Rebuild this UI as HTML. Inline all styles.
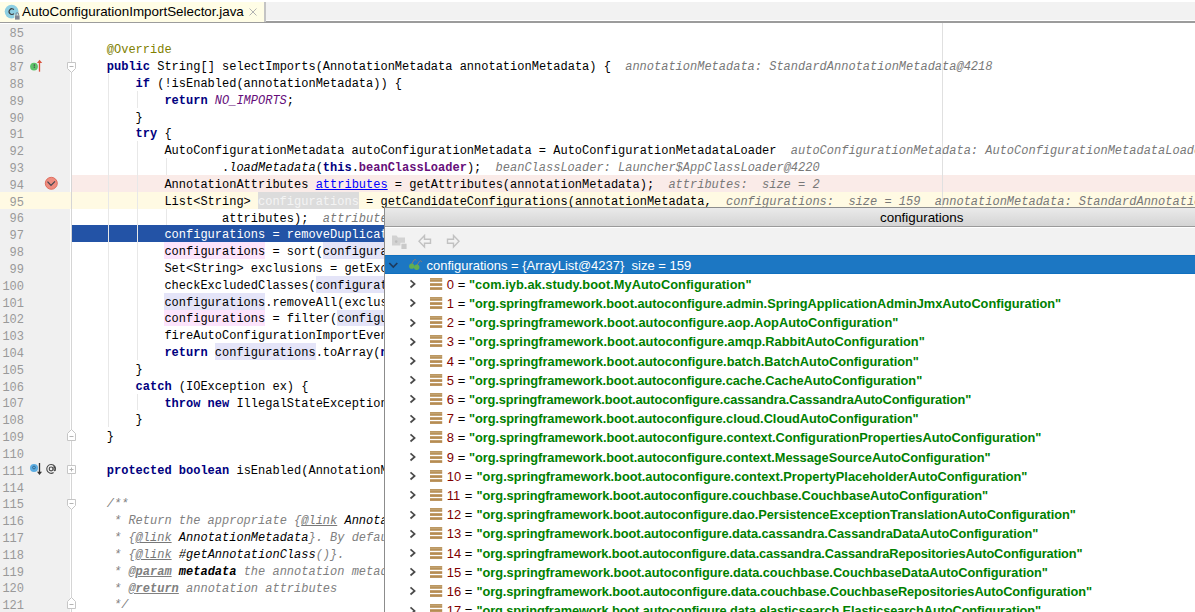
<!DOCTYPE html>
<html><head><meta charset="utf-8">
<style>
*{margin:0;padding:0;box-sizing:border-box}
html,body{width:1195px;height:612px;overflow:hidden;background:#fff}
body{position:relative;font-family:"Liberation Sans",sans-serif}
#tabbar{position:absolute;left:0;top:0;width:1195px;height:23px;background:#fff}
#tabrest{position:absolute;left:266px;top:2px;right:0;height:18px;background:#F2F2F2}
#tabline{position:absolute;left:0;top:21px;right:0;height:2px;background:#9C9C9C}
#tab{position:absolute;left:0;top:2px;width:264px;height:20px;background:#FFFDE6}
#tabedge{position:absolute;left:264px;top:2px;width:2px;height:20px;background:#C4C4C4}
#tabtitle{position:absolute;left:22px;top:3px;font-size:13.4px;color:#000;white-space:nowrap;line-height:18px}
#tabx{position:absolute;left:249px;top:8px;width:8px;height:8px}
#gutter{position:absolute;left:0;top:24px;width:70px;bottom:0;background:#F0F0F0}
#gline{position:absolute;left:71px;top:24px;width:1px;bottom:0;background:#D5D5D5}
.lbg{position:absolute;height:16.82px}
.ln{position:absolute;left:0;width:24px;text-align:right;font:12px/16.8px "Liberation Mono",monospace;color:#999;white-space:pre}
.cl{position:absolute;font:12px/16.8px "Liberation Mono",monospace;color:#000;white-space:pre}
.guide{position:absolute;width:1px;background:#E8E8E8}
.margin{position:absolute;top:23px;bottom:0;width:1px;background:#E0E0E0}
.k{color:#000080;font-weight:bold}
.an{color:#808000}
.st{color:#660E7A;font-style:italic}
.fb{color:#660E7A;font-weight:bold}
.it{font-style:italic}
.lnk{color:#0000FF;text-decoration:underline}
.hlg{color:#F4F4F4}
.hw{}
.hr{}
.sel{color:#fff}
.hint{color:#787878;font-style:italic}
.cm{color:#808080;font-style:italic}
.ct{color:#787878;font-style:italic;text-decoration:underline}
.ctb{color:#808080;font-style:italic;font-weight:bold;text-decoration:underline}
.cb{color:#000;font-style:italic}
.cbb{color:#000;font-style:italic;font-weight:bold}
#popup{position:absolute;left:384px;top:207px;width:820px;height:420px;background:#fff;border-left:1px solid #8C8C8C;border-top:1px solid #8C8C8C}
#ptitle{position:absolute;left:0;top:0;right:0;height:19px;background:linear-gradient(#EAEAEA,#D4D4D4);border-bottom:1px solid #9A9A9A}
#ptitle span{position:absolute;left:495px;top:1px;font-size:13.4px;line-height:17px;color:#000}
#ptool{position:absolute;left:0;top:20px;right:0;height:27px;background:#F2F2F2;border-bottom:1px solid #F6EEE8}
#psel{position:absolute;left:0;top:47px;right:0;height:19px;background:#1C77C3;border-top:1px solid #1070BF;border-bottom:1px solid #1070BF}
#psel .t{position:absolute;left:41.5px;top:0.5px;font-size:13px;line-height:18px;color:#fff;white-space:pre}
.row{position:absolute;left:0;right:0;height:19.2px}
.chev{position:absolute;left:24px;top:5.7px}
.fld{position:absolute;left:44.8px;top:4.3px}
.idx,.eq,.str{position:absolute;top:1.3px;font-size:13px;line-height:19px;white-space:pre;color:#000}
.idx{color:#800000}
.str{color:#008000;font-weight:bold;font-size:12.8px}
</style></head><body>
<div id="tabbar"></div>
<div id="tabrest"></div>
<div id="tabline"></div>
<div id="tab"></div>
<div id="tabedge"></div>
<svg style="position:absolute;left:4px;top:4px" width="17" height="17" viewBox="0 0 17 17">
<circle cx="7.6" cy="7.6" r="6.9" fill="#8ECFE2"/>
<path d="M9.9 5.6 A2.75 2.9 0 1 0 9.9 9.6" fill="none" stroke="#3A3A3A" stroke-width="1.15"/>
<rect x="10.2" y="10.6" width="6" height="6" fill="#FFFDE6" opacity="0.7"/>
<rect x="11" y="11.4" width="4.6" height="4.2" fill="#7E8592"/>
<path d="M12 11.5V9.9A1.3 1.3 0 0 1 14.6 9.9V11.5" fill="none" stroke="#7E8592" stroke-width="1"/>
</svg>
<div id="tabtitle">AutoConfigurationImportSelector.java</div>
<svg id="tabx" viewBox="0 0 8 8"><path d="M0.5 0.5L7.5 7.5M7.5 0.5L0.5 7.5" stroke="#B2B2B2" stroke-width="1"/></svg>
<div id="gutter"></div>
<div class="lbg" style="top:174.98px;left:72px;right:0;background:#FAEBE8"></div>
<div class="lbg" style="top:191.80px;left:0;right:0;background:#FFFAE3"></div>
<div class="lbg" style="top:225.44px;left:72px;right:0;background:#2353A6"></div>
<div class="guide" style="left:108.0px;top:74.06px;height:353.22px"></div>
<div class="guide" style="left:137.0px;top:90.88px;height:16.82px"></div>
<div class="guide" style="left:137.0px;top:141.34px;height:218.66px"></div>
<div class="guide" style="left:166.0px;top:158.16px;height:16.82px"></div>
<div class="guide" style="left:166.0px;top:208.62px;height:16.82px"></div>
<div class="guide" style="left:137.0px;top:393.64px;height:16.82px"></div>
<div class="margin" style="left:942.0px"></div>
<div class="lbg" style="top:191.80px;left:258.00px;width:100.80px;background:#DCDCDC"></div>
<div class="lbg" style="top:242.26px;left:164.40px;width:100.80px;background:#FCE4FC"></div>
<div class="lbg" style="top:242.26px;left:322.80px;width:100.80px;background:#E4E4F8"></div>
<div class="lbg" style="top:275.90px;left:315.60px;width:100.80px;background:#E4E4F8"></div>
<div class="lbg" style="top:292.72px;left:164.40px;width:100.80px;background:#E4E4F8"></div>
<div class="lbg" style="top:309.54px;left:164.40px;width:100.80px;background:#FCE4FC"></div>
<div class="lbg" style="top:309.54px;left:337.20px;width:100.80px;background:#E4E4F8"></div>
<div class="lbg" style="top:343.18px;left:214.80px;width:100.80px;background:#E4E4F8"></div>
<div class="ln" style="top:26.40px">85</div>
<div class="ln" style="top:43.22px">86</div>
<div class="cl" style="top:42.32px;left:106.80px"><span class="an">@Override</span></div>
<div class="ln" style="top:60.04px">87</div>
<div class="cl" style="top:59.14px;left:106.80px"><span class="k">public</span><span class="p"> String[] selectImports(AnnotationMetadata annotationMetadata) {</span></div>
<div class="cl" style="top:59.14px;left:625.20px"><span class="hint">annotationMetadata: StandardAnnotationMetadata@4218</span></div>
<div class="ln" style="top:76.86px">88</div>
<div class="cl" style="top:75.96px;left:135.60px"><span class="k">if</span><span class="p"> (!isEnabled(annotationMetadata)) {</span></div>
<div class="ln" style="top:93.68px">89</div>
<div class="cl" style="top:92.78px;left:164.40px"><span class="k">return</span><span class="p"> </span><span class="st">NO_IMPORTS</span><span class="p">;</span></div>
<div class="ln" style="top:110.50px">90</div>
<div class="cl" style="top:109.60px;left:135.60px"><span class="p">}</span></div>
<div class="ln" style="top:127.32px">91</div>
<div class="cl" style="top:126.42px;left:135.60px"><span class="k">try</span><span class="p"> {</span></div>
<div class="ln" style="top:144.14px">92</div>
<div class="cl" style="top:143.24px;left:164.40px"><span class="p">AutoConfigurationMetadata autoConfigurationMetadata = AutoConfigurationMetadataLoader</span></div>
<div class="cl" style="top:143.24px;left:790.80px"><span class="hint">autoConfigurationMetadata: AutoConfigurationMetadataLoader$PropertiesAutoConfigurationMetadata@4219</span></div>
<div class="ln" style="top:160.96px">93</div>
<div class="cl" style="top:160.06px;left:222.00px"><span class="p">.</span><span class="it">loadMetadata</span><span class="p">(</span><span class="k">this</span><span class="p">.</span><span class="fb">beanClassLoader</span><span class="p">);</span></div>
<div class="cl" style="top:160.06px;left:495.60px"><span class="hint">beanClassLoader: Launcher$AppClassLoader@4220</span></div>
<div class="ln" style="top:177.78px">94</div>
<div class="cl" style="top:176.88px;left:164.40px"><span class="p">AnnotationAttributes </span><span class="lnk">attributes</span><span class="p"> = getAttributes(annotationMetadata);</span></div>
<div class="cl" style="top:176.88px;left:668.40px"><span class="hint">attributes:  size = 2</span></div>
<div class="ln" style="top:194.60px">95</div>
<div class="cl" style="top:193.70px;left:164.40px"><span class="p">List&lt;String&gt; </span><span class="hlg">configurations</span><span class="p"> = getCandidateConfigurations(annotationMetadata,</span></div>
<div class="cl" style="top:193.70px;left:726.00px"><span class="hint">configurations:  size = 159  annotationMetadata: StandardAnnotationMetadata@4218</span></div>
<div class="ln" style="top:211.42px">96</div>
<div class="cl" style="top:210.52px;left:222.00px"><span class="p">attributes);</span></div>
<div class="cl" style="top:210.52px;left:322.80px"><span class="hint">attributes: size = 2</span></div>
<div class="ln" style="top:228.24px">97</div>
<div class="cl" style="top:227.34px;left:164.40px"><span class="sel">configurations = removeDuplicates(configurations);</span></div>
<div class="ln" style="top:245.06px">98</div>
<div class="cl" style="top:244.16px;left:164.40px"><span class="hw">configurations</span><span class="p"> = sort(</span><span class="hr">configurations</span><span class="p">, autoConfigurationMetadata);</span></div>
<div class="ln" style="top:261.88px">99</div>
<div class="cl" style="top:260.98px;left:164.40px"><span class="p">Set&lt;String&gt; exclusions = getExclusions(annotationMetadata, attributes);</span></div>
<div class="ln" style="top:278.70px">100</div>
<div class="cl" style="top:277.80px;left:164.40px"><span class="p">checkExcludedClasses(</span><span class="hr">configurations</span><span class="p">, exclusions);</span></div>
<div class="ln" style="top:295.52px">101</div>
<div class="cl" style="top:294.62px;left:164.40px"><span class="hr">configurations</span><span class="p">.removeAll(exclusions);</span></div>
<div class="ln" style="top:312.34px">102</div>
<div class="cl" style="top:311.44px;left:164.40px"><span class="hw">configurations</span><span class="p"> = filter(</span><span class="hr">configurations</span><span class="p">, autoConfigurationMetadata);</span></div>
<div class="ln" style="top:329.16px">103</div>
<div class="cl" style="top:328.26px;left:164.40px"><span class="p">fireAutoConfigurationImportEvents(configurations, exclusions);</span></div>
<div class="ln" style="top:345.98px">104</div>
<div class="cl" style="top:345.08px;left:164.40px"><span class="k">return</span><span class="p"> </span><span class="hr">configurations</span><span class="p">.toArray(</span><span class="k">new</span><span class="p"> String[configurations.size()]);</span></div>
<div class="ln" style="top:362.80px">105</div>
<div class="cl" style="top:361.90px;left:135.60px"><span class="p">}</span></div>
<div class="ln" style="top:379.62px">106</div>
<div class="cl" style="top:378.72px;left:135.60px"><span class="k">catch</span><span class="p"> (IOException ex) {</span></div>
<div class="ln" style="top:396.44px">107</div>
<div class="cl" style="top:395.54px;left:164.40px"><span class="k">throw</span><span class="p"> </span><span class="k">new</span><span class="p"> IllegalStateException(ex);</span></div>
<div class="ln" style="top:413.26px">108</div>
<div class="cl" style="top:412.36px;left:135.60px"><span class="p">}</span></div>
<div class="ln" style="top:430.08px">109</div>
<div class="cl" style="top:429.18px;left:106.80px"><span class="p">}</span></div>
<div class="ln" style="top:446.90px">110</div>
<div class="ln" style="top:463.72px">111</div>
<div class="cl" style="top:462.82px;left:106.80px"><span class="k">protected</span><span class="p"> </span><span class="k">boolean</span><span class="p"> isEnabled(AnnotationMetadata metadata) {...}</span></div>
<div class="ln" style="top:480.54px">114</div>
<div class="ln" style="top:497.36px">115</div>
<div class="cl" style="top:496.46px;left:106.80px"><span class="cm">/**</span></div>
<div class="ln" style="top:514.18px">116</div>
<div class="cl" style="top:513.28px;left:114.00px"><span class="cm">* Return the appropriate {</span><span class="ct">@link</span><span class="cb"> AnnotationAttributes</span><span class="cm">} from the</span></div>
<div class="ln" style="top:531.00px">117</div>
<div class="cl" style="top:530.10px;left:114.00px"><span class="cm">* {</span><span class="ct">@link</span><span class="cb"> AnnotationMetadata</span><span class="cm">}. By default this method will return attributes for</span></div>
<div class="ln" style="top:547.82px">118</div>
<div class="cl" style="top:546.92px;left:114.00px"><span class="cm">* {</span><span class="ct">@link</span><span class="cb"> #getAnnotationClass</span><span class="cm">()}.</span></div>
<div class="ln" style="top:564.64px">119</div>
<div class="cl" style="top:563.74px;left:114.00px"><span class="cm">* </span><span class="ctb">@param</span><span class="cbb"> metadata</span><span class="cm"> the annotation metadata</span></div>
<div class="ln" style="top:581.46px">120</div>
<div class="cl" style="top:580.56px;left:114.00px"><span class="cm">* </span><span class="ctb">@return</span><span class="cm"> annotation attributes</span></div>
<div class="ln" style="top:598.28px">121</div>
<div class="cl" style="top:597.38px;left:114.00px"><span class="cm">*/</span></div>
<div id="gline"></div>
<svg style="position:absolute;left:0;top:0;overflow:visible" width="1" height="1">
<g fill="#fff" stroke="#C6C6C6" stroke-width="1">
<path d="M67.5 62.5H75.5V68.5L71.5 72.5L67.5 68.5Z"/>
<path d="M67.5 433.5L71.5 429.5L75.5 433.5V440.5H67.5Z"/>
<path d="M67.5 465.5H75.5V473.5H67.5Z"/>
<path d="M67.5 499.5H75.5V505.5L71.5 509.5L67.5 505.5Z"/>
<path d="M67.5 601.5L71.5 597.5L75.5 601.5V608.5H67.5Z"/>
</g>
<g stroke="#B4B4B4" stroke-width="1">
<path d="M69.5 66.5H73.5M69.5 436.5H73.5M69.5 503.5H73.5M69.5 604.5H73.5M69.5 469.5H73.5M71.5 467.5V471.5"/>
</g>
<circle cx="34" cy="66.6" r="3.9" fill="#5EC26A"/>
<path d="M34.3 64.3V68.2" stroke="#505050" stroke-width="1.1" stroke-dasharray="1.6 0.6"/>
<path d="M39.5 62.5V71.7" stroke="#D9543F" stroke-width="1.3"/>
<path d="M37 63L39.5 59.8L42.2 63Z" fill="#D9543F"/>
<circle cx="51.3" cy="183.3" r="6" fill="#EE8D80" stroke="#DD6656" stroke-width="0.9"/>
<path d="M47.5 181.6L51 185.4L55 181.3" fill="none" stroke="#3E4650" stroke-width="1.2"/>
<circle cx="34" cy="468" r="4" fill="#5DADE2"/>
<circle cx="34" cy="467.5" r="1.4" fill="none" stroke="#2C5C7C" stroke-width="0.8"/>
<path d="M39.5 463V472.5" stroke="#333" stroke-width="1.3"/>
<path d="M37 471.8L39.5 475L42 471.8Z" fill="#333"/>
</svg>
<svg style="position:absolute;left:0;top:0;overflow:visible" width="1" height="1"><g fill="none" stroke="#4A4A4A" stroke-width="1.15">
<circle cx="51.1" cy="468.9" r="1.9"/>
<path d="M54 466.3V469.8Q54.3 471.2 55.3 470.4A4.4 4.4 0 1 0 53.6 472.6"/>
</g></svg>

<div id="popup">
<div id="ptitle"><span>configurations</span></div>
<div id="ptool">
<svg style="position:absolute;left:5.5px;top:5.5px" width="16" height="16" viewBox="0 0 16 16">
<path d="M1 1.5H5.5L7 3.5H14V11.5H1Z" fill="#D2D2D2"/>
<circle cx="5.2" cy="7.6" r="1.3" fill="#BDBDBD"/>
<rect x="9.5" y="8.8" width="6" height="6" fill="#F2F2F2"/>
<rect x="10.4" y="9.7" width="5.2" height="5.3" fill="#CACACA"/>
</svg>
<svg style="position:absolute;left:33px;top:6px" width="14" height="15" viewBox="0 0 14 15">
<path d="M1 7.3L6.5 1.5V5.3H12.5V9.3H6.5V13.1Z" fill="none" stroke="#C2C2C2" stroke-width="1.4" stroke-linejoin="miter"/>
</svg>
<svg style="position:absolute;left:61px;top:6px" width="14" height="15" viewBox="0 0 14 15">
<path d="M13 7.3L7.5 1.5V5.3H1.5V9.3H7.5V13.1Z" fill="none" stroke="#C2C2C2" stroke-width="1.4" stroke-linejoin="miter"/>
</svg>
</div>
<div id="psel">
<svg style="position:absolute;left:3px;top:5px" width="12" height="9" viewBox="0 0 12 9"><path d="M1.3 2L5.3 6L9.3 2" fill="none" stroke="#1E3A5C" stroke-width="1.7"/></svg>
<svg style="position:absolute;left:22px;top:-4px" width="18" height="18" viewBox="0 0 18 18">
<path d="M4.5 12.5L6.8 8.3Q8.3 6.6 9.3 8.4M9.8 13.5L12.3 9.5Q13.8 7.9 14.8 9.8" fill="none" stroke="#A27A62" stroke-width="0.9"/>
<circle cx="4.7" cy="14.2" r="2.6" fill="#62AE52"/>
<circle cx="9.7" cy="15.3" r="2.7" fill="#62AE52"/>
</svg>
<span class="t">configurations = {ArrayList@4237}  size = 159</span></div>
<div class="row" style="top:65.50px"><svg class="chev" width="8" height="10" viewBox="0 0 8 10"><path d="M1.5 1.3L5.6 4.9L1.5 8.5" fill="none" stroke="#4A4A4A" stroke-width="1.7"/></svg><svg class="fld" width="13" height="13" viewBox="0 0 13 13"><rect x="0" y="0" width="12.2" height="1.9" fill="#BC9862"/><rect x="0" y="2" width="12.2" height="1.8" fill="#B8925A"/><rect x="0" y="5.2" width="12.2" height="2.7" fill="#B68C52"/><rect x="0" y="9.2" width="12.2" height="2.7" fill="#B68C52"/></svg><span class="idx" style="left:61.7px">0</span><span class="eq" style="left:72.8px">=</span><span class="str" style="left:84.0px;letter-spacing:0.0443px">"com.iyb.ak.study.boot.MyAutoConfiguration"</span></div>
<div class="row" style="top:84.70px"><svg class="chev" width="8" height="10" viewBox="0 0 8 10"><path d="M1.5 1.3L5.6 4.9L1.5 8.5" fill="none" stroke="#4A4A4A" stroke-width="1.7"/></svg><svg class="fld" width="13" height="13" viewBox="0 0 13 13"><rect x="0" y="0" width="12.2" height="1.9" fill="#BC9862"/><rect x="0" y="2" width="12.2" height="1.8" fill="#B8925A"/><rect x="0" y="5.2" width="12.2" height="2.7" fill="#B68C52"/><rect x="0" y="9.2" width="12.2" height="2.7" fill="#B68C52"/></svg><span class="idx" style="left:61.7px">1</span><span class="eq" style="left:72.8px">=</span><span class="str" style="left:84.0px;letter-spacing:-0.0180px">"org.springframework.boot.autoconfigure.admin.SpringApplicationAdminJmxAutoConfiguration"</span></div>
<div class="row" style="top:103.90px"><svg class="chev" width="8" height="10" viewBox="0 0 8 10"><path d="M1.5 1.3L5.6 4.9L1.5 8.5" fill="none" stroke="#4A4A4A" stroke-width="1.7"/></svg><svg class="fld" width="13" height="13" viewBox="0 0 13 13"><rect x="0" y="0" width="12.2" height="1.9" fill="#BC9862"/><rect x="0" y="2" width="12.2" height="1.8" fill="#B8925A"/><rect x="0" y="5.2" width="12.2" height="2.7" fill="#B68C52"/><rect x="0" y="9.2" width="12.2" height="2.7" fill="#B68C52"/></svg><span class="idx" style="left:61.7px">2</span><span class="eq" style="left:72.8px">=</span><span class="str" style="left:84.0px;letter-spacing:0.0201px">"org.springframework.boot.autoconfigure.aop.AopAutoConfiguration"</span></div>
<div class="row" style="top:123.10px"><svg class="chev" width="8" height="10" viewBox="0 0 8 10"><path d="M1.5 1.3L5.6 4.9L1.5 8.5" fill="none" stroke="#4A4A4A" stroke-width="1.7"/></svg><svg class="fld" width="13" height="13" viewBox="0 0 13 13"><rect x="0" y="0" width="12.2" height="1.9" fill="#BC9862"/><rect x="0" y="2" width="12.2" height="1.8" fill="#B8925A"/><rect x="0" y="5.2" width="12.2" height="2.7" fill="#B68C52"/><rect x="0" y="9.2" width="12.2" height="2.7" fill="#B68C52"/></svg><span class="idx" style="left:61.7px">3</span><span class="eq" style="left:72.8px">=</span><span class="str" style="left:84.0px;letter-spacing:0.0202px">"org.springframework.boot.autoconfigure.amqp.RabbitAutoConfiguration"</span></div>
<div class="row" style="top:142.30px"><svg class="chev" width="8" height="10" viewBox="0 0 8 10"><path d="M1.5 1.3L5.6 4.9L1.5 8.5" fill="none" stroke="#4A4A4A" stroke-width="1.7"/></svg><svg class="fld" width="13" height="13" viewBox="0 0 13 13"><rect x="0" y="0" width="12.2" height="1.9" fill="#BC9862"/><rect x="0" y="2" width="12.2" height="1.8" fill="#B8925A"/><rect x="0" y="5.2" width="12.2" height="2.7" fill="#B68C52"/><rect x="0" y="9.2" width="12.2" height="2.7" fill="#B68C52"/></svg><span class="idx" style="left:61.7px">4</span><span class="eq" style="left:72.8px">=</span><span class="str" style="left:84.0px;letter-spacing:-0.0026px">"org.springframework.boot.autoconfigure.batch.BatchAutoConfiguration"</span></div>
<div class="row" style="top:161.50px"><svg class="chev" width="8" height="10" viewBox="0 0 8 10"><path d="M1.5 1.3L5.6 4.9L1.5 8.5" fill="none" stroke="#4A4A4A" stroke-width="1.7"/></svg><svg class="fld" width="13" height="13" viewBox="0 0 13 13"><rect x="0" y="0" width="12.2" height="1.9" fill="#BC9862"/><rect x="0" y="2" width="12.2" height="1.8" fill="#B8925A"/><rect x="0" y="5.2" width="12.2" height="2.7" fill="#B68C52"/><rect x="0" y="9.2" width="12.2" height="2.7" fill="#B68C52"/></svg><span class="idx" style="left:61.7px">5</span><span class="eq" style="left:72.8px">=</span><span class="str" style="left:84.0px;letter-spacing:-0.0276px">"org.springframework.boot.autoconfigure.cache.CacheAutoConfiguration"</span></div>
<div class="row" style="top:180.70px"><svg class="chev" width="8" height="10" viewBox="0 0 8 10"><path d="M1.5 1.3L5.6 4.9L1.5 8.5" fill="none" stroke="#4A4A4A" stroke-width="1.7"/></svg><svg class="fld" width="13" height="13" viewBox="0 0 13 13"><rect x="0" y="0" width="12.2" height="1.9" fill="#BC9862"/><rect x="0" y="2" width="12.2" height="1.8" fill="#B8925A"/><rect x="0" y="5.2" width="12.2" height="2.7" fill="#B68C52"/><rect x="0" y="9.2" width="12.2" height="2.7" fill="#B68C52"/></svg><span class="idx" style="left:61.7px">6</span><span class="eq" style="left:72.8px">=</span><span class="str" style="left:84.0px;letter-spacing:-0.0900px">"org.springframework.boot.autoconfigure.cassandra.CassandraAutoConfiguration"</span></div>
<div class="row" style="top:199.90px"><svg class="chev" width="8" height="10" viewBox="0 0 8 10"><path d="M1.5 1.3L5.6 4.9L1.5 8.5" fill="none" stroke="#4A4A4A" stroke-width="1.7"/></svg><svg class="fld" width="13" height="13" viewBox="0 0 13 13"><rect x="0" y="0" width="12.2" height="1.9" fill="#BC9862"/><rect x="0" y="2" width="12.2" height="1.8" fill="#B8925A"/><rect x="0" y="5.2" width="12.2" height="2.7" fill="#B68C52"/><rect x="0" y="9.2" width="12.2" height="2.7" fill="#B68C52"/></svg><span class="idx" style="left:61.7px">7</span><span class="eq" style="left:72.8px">=</span><span class="str" style="left:84.0px;letter-spacing:-0.0171px">"org.springframework.boot.autoconfigure.cloud.CloudAutoConfiguration"</span></div>
<div class="row" style="top:219.10px"><svg class="chev" width="8" height="10" viewBox="0 0 8 10"><path d="M1.5 1.3L5.6 4.9L1.5 8.5" fill="none" stroke="#4A4A4A" stroke-width="1.7"/></svg><svg class="fld" width="13" height="13" viewBox="0 0 13 13"><rect x="0" y="0" width="12.2" height="1.9" fill="#BC9862"/><rect x="0" y="2" width="12.2" height="1.8" fill="#B8925A"/><rect x="0" y="5.2" width="12.2" height="2.7" fill="#B68C52"/><rect x="0" y="9.2" width="12.2" height="2.7" fill="#B68C52"/></svg><span class="idx" style="left:61.7px">8</span><span class="eq" style="left:72.8px">=</span><span class="str" style="left:84.0px;letter-spacing:-0.0075px">"org.springframework.boot.autoconfigure.context.ConfigurationPropertiesAutoConfiguration"</span></div>
<div class="row" style="top:238.30px"><svg class="chev" width="8" height="10" viewBox="0 0 8 10"><path d="M1.5 1.3L5.6 4.9L1.5 8.5" fill="none" stroke="#4A4A4A" stroke-width="1.7"/></svg><svg class="fld" width="13" height="13" viewBox="0 0 13 13"><rect x="0" y="0" width="12.2" height="1.9" fill="#BC9862"/><rect x="0" y="2" width="12.2" height="1.8" fill="#B8925A"/><rect x="0" y="5.2" width="12.2" height="2.7" fill="#B68C52"/><rect x="0" y="9.2" width="12.2" height="2.7" fill="#B68C52"/></svg><span class="idx" style="left:61.7px">9</span><span class="eq" style="left:72.8px">=</span><span class="str" style="left:84.0px;letter-spacing:-0.0224px">"org.springframework.boot.autoconfigure.context.MessageSourceAutoConfiguration"</span></div>
<div class="row" style="top:257.50px"><svg class="chev" width="8" height="10" viewBox="0 0 8 10"><path d="M1.5 1.3L5.6 4.9L1.5 8.5" fill="none" stroke="#4A4A4A" stroke-width="1.7"/></svg><svg class="fld" width="13" height="13" viewBox="0 0 13 13"><rect x="0" y="0" width="12.2" height="1.9" fill="#BC9862"/><rect x="0" y="2" width="12.2" height="1.8" fill="#B8925A"/><rect x="0" y="5.2" width="12.2" height="2.7" fill="#B68C52"/><rect x="0" y="9.2" width="12.2" height="2.7" fill="#B68C52"/></svg><span class="idx" style="left:61.7px">10</span><span class="eq" style="left:79.8px">=</span><span class="str" style="left:91.5px;letter-spacing:-0.0019px">"org.springframework.boot.autoconfigure.context.PropertyPlaceholderAutoConfiguration"</span></div>
<div class="row" style="top:276.70px"><svg class="chev" width="8" height="10" viewBox="0 0 8 10"><path d="M1.5 1.3L5.6 4.9L1.5 8.5" fill="none" stroke="#4A4A4A" stroke-width="1.7"/></svg><svg class="fld" width="13" height="13" viewBox="0 0 13 13"><rect x="0" y="0" width="12.2" height="1.9" fill="#BC9862"/><rect x="0" y="2" width="12.2" height="1.8" fill="#B8925A"/><rect x="0" y="5.2" width="12.2" height="2.7" fill="#B68C52"/><rect x="0" y="9.2" width="12.2" height="2.7" fill="#B68C52"/></svg><span class="idx" style="left:61.7px">11</span><span class="eq" style="left:79.8px">=</span><span class="str" style="left:91.5px;letter-spacing:-0.0608px">"org.springframework.boot.autoconfigure.couchbase.CouchbaseAutoConfiguration"</span></div>
<div class="row" style="top:295.90px"><svg class="chev" width="8" height="10" viewBox="0 0 8 10"><path d="M1.5 1.3L5.6 4.9L1.5 8.5" fill="none" stroke="#4A4A4A" stroke-width="1.7"/></svg><svg class="fld" width="13" height="13" viewBox="0 0 13 13"><rect x="0" y="0" width="12.2" height="1.9" fill="#BC9862"/><rect x="0" y="2" width="12.2" height="1.8" fill="#B8925A"/><rect x="0" y="5.2" width="12.2" height="2.7" fill="#B68C52"/><rect x="0" y="9.2" width="12.2" height="2.7" fill="#B68C52"/></svg><span class="idx" style="left:61.7px">12</span><span class="eq" style="left:79.8px">=</span><span class="str" style="left:91.5px;letter-spacing:-0.0544px">"org.springframework.boot.autoconfigure.dao.PersistenceExceptionTranslationAutoConfiguration"</span></div>
<div class="row" style="top:315.10px"><svg class="chev" width="8" height="10" viewBox="0 0 8 10"><path d="M1.5 1.3L5.6 4.9L1.5 8.5" fill="none" stroke="#4A4A4A" stroke-width="1.7"/></svg><svg class="fld" width="13" height="13" viewBox="0 0 13 13"><rect x="0" y="0" width="12.2" height="1.9" fill="#BC9862"/><rect x="0" y="2" width="12.2" height="1.8" fill="#B8925A"/><rect x="0" y="5.2" width="12.2" height="2.7" fill="#B68C52"/><rect x="0" y="9.2" width="12.2" height="2.7" fill="#B68C52"/></svg><span class="idx" style="left:61.7px">13</span><span class="eq" style="left:79.8px">=</span><span class="str" style="left:91.5px;letter-spacing:-0.0571px">"org.springframework.boot.autoconfigure.data.cassandra.CassandraDataAutoConfiguration"</span></div>
<div class="row" style="top:334.30px"><svg class="chev" width="8" height="10" viewBox="0 0 8 10"><path d="M1.5 1.3L5.6 4.9L1.5 8.5" fill="none" stroke="#4A4A4A" stroke-width="1.7"/></svg><svg class="fld" width="13" height="13" viewBox="0 0 13 13"><rect x="0" y="0" width="12.2" height="1.9" fill="#BC9862"/><rect x="0" y="2" width="12.2" height="1.8" fill="#B8925A"/><rect x="0" y="5.2" width="12.2" height="2.7" fill="#B68C52"/><rect x="0" y="9.2" width="12.2" height="2.7" fill="#B68C52"/></svg><span class="idx" style="left:61.7px">14</span><span class="eq" style="left:79.8px">=</span><span class="str" style="left:91.5px;letter-spacing:-0.1122px">"org.springframework.boot.autoconfigure.data.cassandra.CassandraRepositoriesAutoConfiguration"</span></div>
<div class="row" style="top:353.50px"><svg class="chev" width="8" height="10" viewBox="0 0 8 10"><path d="M1.5 1.3L5.6 4.9L1.5 8.5" fill="none" stroke="#4A4A4A" stroke-width="1.7"/></svg><svg class="fld" width="13" height="13" viewBox="0 0 13 13"><rect x="0" y="0" width="12.2" height="1.9" fill="#BC9862"/><rect x="0" y="2" width="12.2" height="1.8" fill="#B8925A"/><rect x="0" y="5.2" width="12.2" height="2.7" fill="#B68C52"/><rect x="0" y="9.2" width="12.2" height="2.7" fill="#B68C52"/></svg><span class="idx" style="left:61.7px">15</span><span class="eq" style="left:79.8px">=</span><span class="str" style="left:91.5px;letter-spacing:-0.0297px">"org.springframework.boot.autoconfigure.data.couchbase.CouchbaseDataAutoConfiguration"</span></div>
<div class="row" style="top:372.70px"><svg class="chev" width="8" height="10" viewBox="0 0 8 10"><path d="M1.5 1.3L5.6 4.9L1.5 8.5" fill="none" stroke="#4A4A4A" stroke-width="1.7"/></svg><svg class="fld" width="13" height="13" viewBox="0 0 13 13"><rect x="0" y="0" width="12.2" height="1.9" fill="#BC9862"/><rect x="0" y="2" width="12.2" height="1.8" fill="#B8925A"/><rect x="0" y="5.2" width="12.2" height="2.7" fill="#B68C52"/><rect x="0" y="9.2" width="12.2" height="2.7" fill="#B68C52"/></svg><span class="idx" style="left:61.7px">16</span><span class="eq" style="left:79.8px">=</span><span class="str" style="left:91.5px;letter-spacing:-0.0870px">"org.springframework.boot.autoconfigure.data.couchbase.CouchbaseRepositoriesAutoConfiguration"</span></div>
<div class="row" style="top:391.90px"><svg class="chev" width="8" height="10" viewBox="0 0 8 10"><path d="M1.5 1.3L5.6 4.9L1.5 8.5" fill="none" stroke="#4A4A4A" stroke-width="1.7"/></svg><svg class="fld" width="13" height="13" viewBox="0 0 13 13"><rect x="0" y="0" width="12.2" height="1.9" fill="#BC9862"/><rect x="0" y="2" width="12.2" height="1.8" fill="#B8925A"/><rect x="0" y="5.2" width="12.2" height="2.7" fill="#B68C52"/><rect x="0" y="9.2" width="12.2" height="2.7" fill="#B68C52"/></svg><span class="idx" style="left:61.7px">17</span><span class="eq" style="left:79.8px">=</span><span class="str" style="left:91.5px;letter-spacing:-0.1044px">"org.springframework.boot.autoconfigure.data.elasticsearch.ElasticsearchAutoConfiguration"</span></div>
</div>
</body></html>
